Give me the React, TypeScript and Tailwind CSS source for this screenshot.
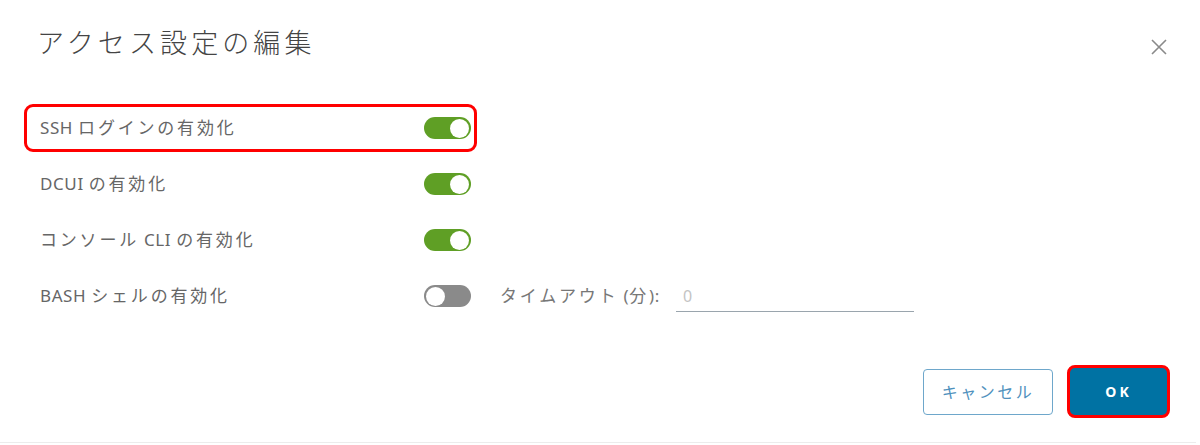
const font = "font-['Noto_Sans','Noto_Sans_CJK_JP',sans-serif]";

// Latin runs stay tight, Japanese runs get the wide spacing seen in the screenshot
const Spaced = ({ text }: { text: string }) => {
  const parts = text.match(/[\x20-\x7e]+|[^\x20-\x7e]+/g) ?? [];
  return (
    <>
      {parts.map((p, i) =>
        /^[\x20-\x7e]+$/.test(p) ? (
          <span key={i} className="tracking-[0.6px]">{p}</span>
        ) : (
          <span key={i} className="tracking-[2.8px]">{p}</span>
        )
      )}
    </>
  );
};

interface ToggleProps {
  on: boolean;
}

const Toggle = ({ on }: ToggleProps) => (
  <div
    className={`relative w-[47px] h-[22px] rounded-full flex items-center px-[2px] ${
      on ? 'bg-[#5f9f25] justify-end' : 'bg-[#8a8a8a] justify-start'
    }`}
  >
    <div className="w-[19px] h-[19px] rounded-full bg-white" />
  </div>
);

interface RowProps {
  label: string;
  on: boolean;
  highlight?: boolean;
}

const SettingRow = ({ label, on, highlight }: RowProps) => (
  <div
    className={`w-[453px] h-[48px] flex items-center justify-between pl-[13px] pr-[3px] rounded-[9px] border-[3px] ${
      highlight ? 'border-[#ff0000]' : 'border-transparent'
    }`}
  >
    <span className="text-[17px] text-[#666666]">
      <Spaced text={label} />
    </span>
    <Toggle on={on} />
  </div>
);

export default function App() {
  return (
    <div className={`w-[1200px] h-[445px] bg-white ${font}`}>
      <div className="w-[1196px] h-[443px] border-b border-[#ececec] flex flex-col">
        <div className="flex items-start justify-between pl-[37px] pr-[28px] pt-[25px]">
          <h1 className="text-[27px] leading-[36px] tracking-[4.1px] text-[#444444] font-light">アクセス設定の編集</h1>
          <svg width="18" height="18" viewBox="0 0 18 18" className="mt-[13px]">
            <path d="M2 2 L16 16 M16 2 L2 16" stroke="#8a8a8a" strokeWidth="1.6" fill="none" />
          </svg>
        </div>

        <div className="flex flex-col gap-[8px] pl-[24px] mt-[43px]">
          <SettingRow label="SSH ログインの有効化" on highlight />
          <SettingRow label="DCUI の有効化" on />
          <SettingRow label="コンソール CLI の有効化" on />
          <div className="flex items-center">
            <SettingRow label="BASH シェルの有効化" on={false} />
            <span className="ml-[23px] text-[17px] text-[#777777]">
              <Spaced text="タイムアウト (分):" />
            </span>
            <div className="ml-auto mr-[282px] w-[238px] h-[32px] border-b border-[#9aa5ad] flex items-center pl-[7px]">
              <span className="text-[16px] text-[#c4c4c4]">0</span>
            </div>
          </div>
        </div>

        <div className="flex justify-end items-center gap-[14px] pr-[26px] mt-[45px]">
          <button className="w-[130px] h-[46px] rounded-[4px] border-[1.5px] border-[#6ea7cb] bg-white text-[#4f91bd] text-[16px] tracking-[2.5px]">
            キャンセル
          </button>
          <button className="w-[103px] h-[53px] rounded-[8px] border-[3px] border-[#ff0000] bg-[#0072a3] text-white text-[14px] font-bold tracking-[3px]">
            OK
          </button>
        </div>
      </div>
    </div>
  );
}
